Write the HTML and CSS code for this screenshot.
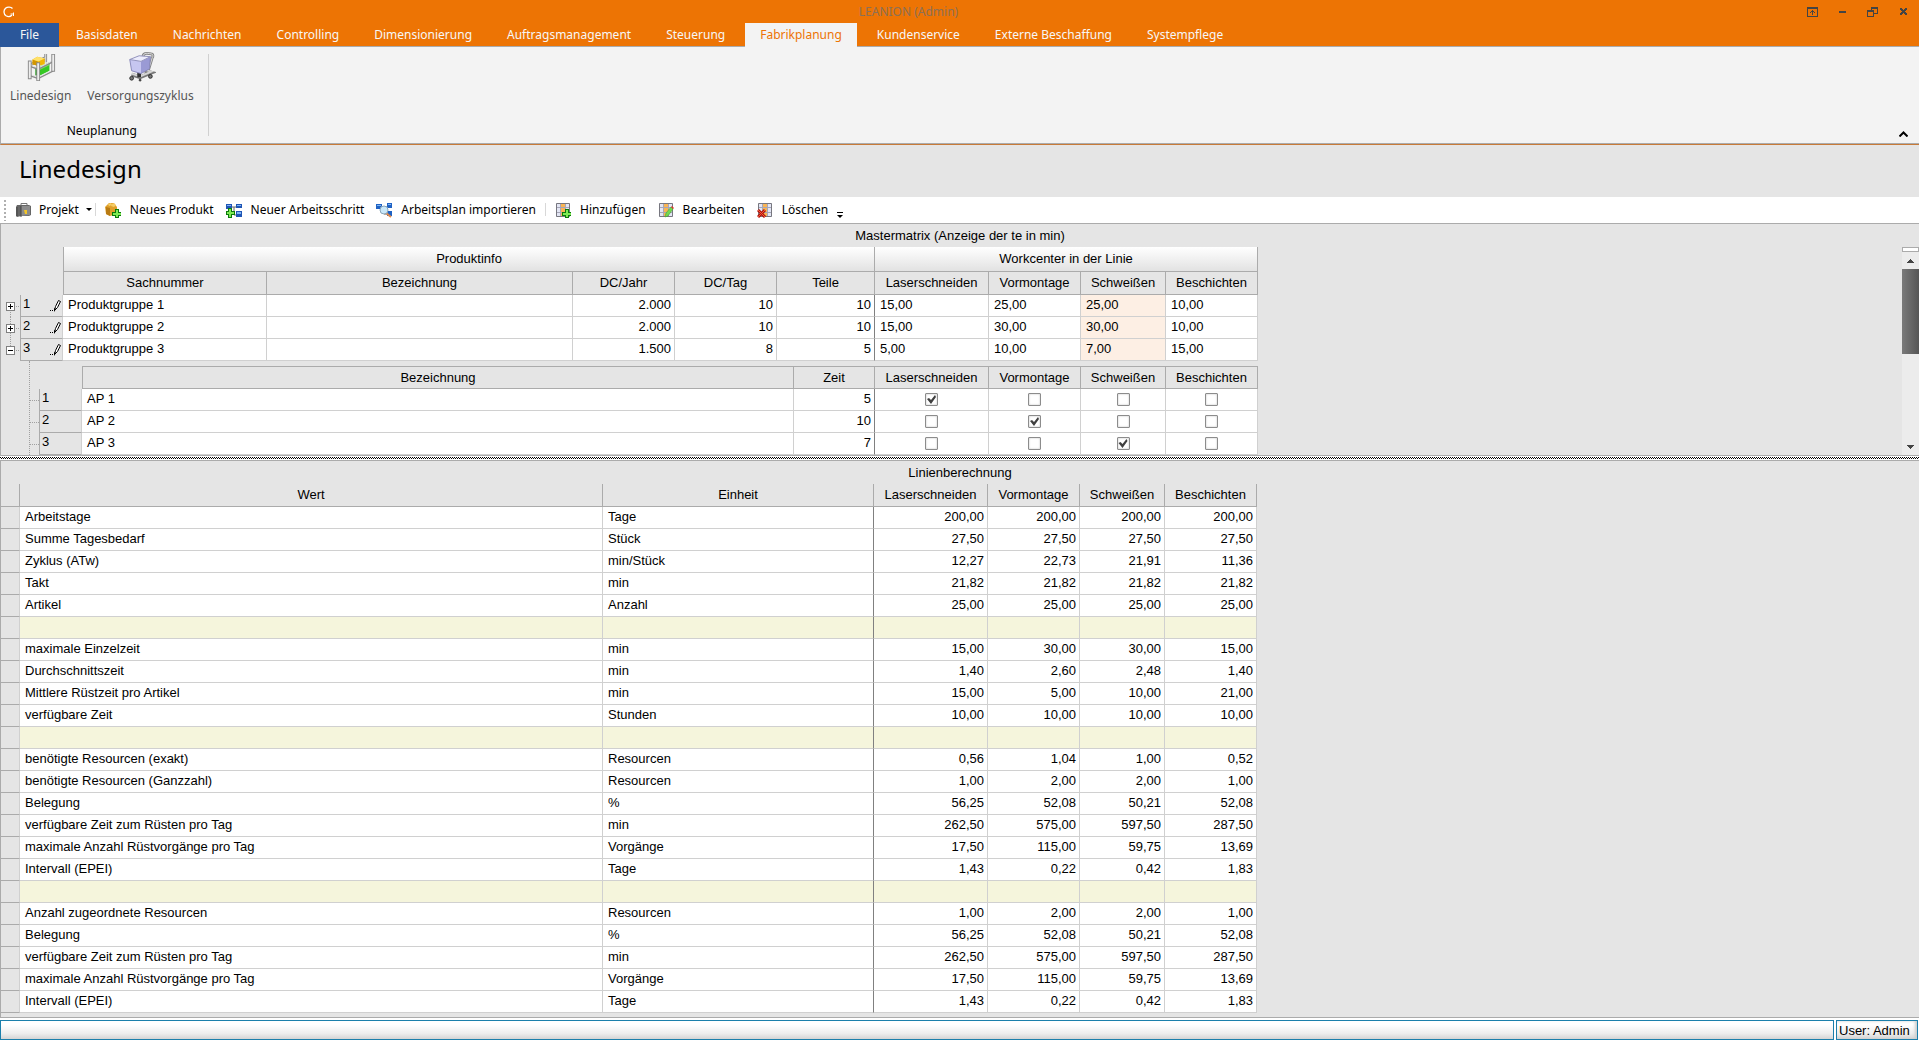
FILE: index.html
```html
<!DOCTYPE html>
<html lang="de">
  <head>
    <meta charset="UTF-8" />
    <meta name="viewport" content="width=device-width, initial-scale=1.0" />
    <title>LEANION (Admin)</title>
    <link rel="stylesheet" href="styles.css">
  </head>
  <body>
    <header class="titlebar">
      <svg class="logo" width="12" height="12" viewBox="0 0 12 12" fill="none" stroke="#fff">
        <path d="M9.5 2.5C8 .8 4.500.5 2.500 2.300.3 4.500.600 8 3 9.700c2 1.300 4.500 1 6-.7" stroke-width="1.300" />
        <path d="M10.500 6.500v3.500M7.500 8h3" stroke-width="1" />
      </svg>
      <span class="app-title">LEANION (Admin)</span>
      <div class="window-buttons">
        <button type="button" aria-label="Menüband">
          <svg width="11" height="10" viewBox="0 0 11 10"><path fill="#444" fill-rule="evenodd" d="M0 0h11v10H0zM1 2v7h9V2zM5 3h1v1h1v1h1v1H7V5H6v3H5V5H4v1H3V5h1V4h1z" /></svg>
        </button>
        <button type="button" aria-label="Minimieren">
          <svg width="7" height="2" viewBox="0 0 7 2"><path fill="#444" d="M0 0h7v2H0z" /></svg>
        </button>
        <button type="button" aria-label="Wiederherstellen">
          <svg width="11" height="10" viewBox="0 0 11 10"><path fill="#444" fill-rule="evenodd" d="M4 0h7v7H7V6h3V2H5v1H4zM0 3h7v7H0zM1 5v4h5V5z" /></svg>
        </button>
        <button class="close" type="button" aria-label="Schließen">
          <svg width="7" height="7" viewBox="0 0 7 7"><path fill="#444" d="M0 0h2v1h1v1h1V1h1V0h2v2H6v1H5v1h1v1h1v2H5V6H4V5H3v1H2v1H0V5h1V4h1V3H1V2H0z" /></svg>
        </button>
      </div>
    </header>

    <nav class="tabs">
      <a class="file" href="#">File</a>
      <a href="#">Basisdaten</a>
      <a href="#">Nachrichten</a>
      <a href="#">Controlling</a>
      <a href="#">Dimensionierung</a>
      <a href="#">Auftragsmanagement</a>
      <a href="#">Steuerung</a>
      <a class="active" href="#">Fabrikplanung</a>
      <a href="#">Kundenservice</a>
      <a href="#">Externe Beschaffung</a>
      <a href="#">Systempflege</a>
    </nav>

    <section class="ribbon">
      <div class="ribbon-group">
        <div class="ribbon-items">
          <button type="button">
            <svg width="30" height="30" viewBox="0 0 32 32">
              <path d="M21 2v9M4 14l17-8" fill="none" stroke="#8a8a8a" stroke-width="3" />
              <path d="M21 2v9M4 14l17-8" fill="none" stroke="#e6e6e6" />
              <path d="M10 18l6-3v9l-6 1z" fill="#17930f" /><path d="M15 16l10-5v9l-10 5z" fill="#35c824" /><path d="M10 18l5-3 10-4v3l-10 5z" fill="#7be964" />
              <path d="M7 8l5-3 8 2v6l-7 2-6-2z" fill="#f2b705" /><path d="M7 8l6 2v5l-6-2z" fill="#d39600" /><path d="M7 8l5-3 8 2-7 3z" fill="#ffe16a" />
              <path d="M4 15l9 3 16-8M4 25l9 3 16-8" fill="none" stroke="#8a8a8a" stroke-width="2" />
              <path d="M4 14l9 3 16-8M4 24l9 3 16-8" fill="none" stroke="#ececec" />
              <path d="M4 9v20M13 11v20M29 2v19" fill="none" stroke="#8a8a8a" stroke-width="4" />
              <path d="M4 10v18M13 12v18M29 3v17" fill="none" stroke="#ededed" stroke-width="2" />
            </svg>
            Linedesign
          </button>
          <button type="button">
            <svg width="30" height="30" viewBox="0 0 32 32">
              <path d="M18 6c0-5 3-5 9-4 2 0 2 3 1 4l-4 13" fill="none" stroke="#858585" stroke-width="3" />
              <path d="M18 6c0-5 3-5 9-4 2 0 2 3 1 4l-4 13" fill="none" stroke="#dedede" stroke-width="1" />
              <path d="M6 24l9 3 12-5-7-2" fill="none" stroke="#777" stroke-width="4" />
              <path d="M6 23l9 3 12-5-7-2" fill="none" stroke="#d4d4d4" stroke-width="2" />
              <path d="M12 22h4v5h-4z" fill="#333" />
              <path d="M4 8l12 2v13L6 20z" fill="#c6c6f0" /><path d="M16 10l10-5-1 13-9 5z" fill="#9a9ad4" />
              <path d="M4 8l10-4 12 1-10 5z" fill="#ececfc" stroke="#8c8cb8" />
              <path d="M4 8l2 12 10 3 9-5 1-13" fill="none" stroke="#8585b8" />
              <g fill="#777" stroke="#2b2b2b"><circle cx="6" cy="28" r="2" /><circle cx="15" cy="30" r="1" /><circle cx="26" cy="26" r="2" /></g>
            </svg>
            Versorgungszyklus
          </button>
        </div>
        <div class="ribbon-caption">Neuplanung</div>
      </div>
      <button class="collapse" type="button" aria-label="Menüband reduzieren">
        <svg width="9" height="6" viewBox="0 0 9 6"><path d="M.5 5.500l4-4 4 4" fill="none" stroke="#000" stroke-width="2" /></svg>
      </button>
    </section>

    <h1>Linedesign</h1>

    <div class="toolbar">
      <span class="grip"></span>
      <button class="menu" type="button">
        <svg width="16" height="16" viewBox="0 0 16 16"><path d="M5 4V1.500h6V3" fill="none" stroke="#777" /><path d="M1 3h12l2 1v9l-2 1H5l-4 1-1-1V5z" fill="#666" /><path d="M5 4h9v9l-9 1z" fill="#8c8c8c" /><path d="M5 4v11M1 5v9" stroke="#444" fill="none" /><path d="M8 8h3v4H9z" fill="#f5c726" /></svg>
        Projekt
        <i class="caret"></i>
      </button>
      <span class="sep"></span>
      <button type="button">
        <svg width="16" height="16" viewBox="0 0 16 16"><path d="M0 5l4-4h5l3 4v7l-7 2-4-2z" fill="#dfa02b" /><path d="M1 5l4 1v8l-4-2z" fill="#b97b13" /><path d="M3 2l3-1 1 2-3 1zM8 1l3 2-2 2-3-1z" fill="#f6ce69" /><path d="M10 7h4v3h2v4h-2v2h-4v-2H7v-4h3z" fill="#0b7a0b" /><path d="M11 8h2v3h3v2h-3v2h-2v-2H8v-2h3z" fill="#7eea55" /></svg>
        Neues Produkt
      </button>
      <button type="button">
        <svg width="16" height="16" viewBox="0 0 16 16"><path d="M5 5h5M8 5v8h2" fill="none" stroke="#666" /><path d="M0 2h6v5H0zM10 2h6v4h-6zM10 9h6v6h-6z" fill="#1f55b5" /><path d="M1 3h4v1H1zM11 3h4v1h-4zM11 10h4v2h-4z" fill="#7db5f5" /><path d="M2 6h4v3h3v4H6v3H2v-3H0V9h2z" fill="#0b7a0b" /><path d="M3 7h2v3h3v2H5v3H3v-3H1v-2h2z" fill="#7eea55" /></svg>
        Neuer Arbeitsschritt
      </button>
      <button type="button">
        <svg width="16" height="16" viewBox="0 0 16 16"><path d="M4 5h7M8 5v7h4" fill="none" stroke="#666" /><path d="M0 2h6v5H0zM11 1h5v5h-5zM11 9h5v5h-5z" fill="#1f62c4" /><path d="M1 3h4v1H1zM12 2h3v1h-3z" fill="#7db5f5" /><path d="M10 11l5 4" stroke="#e08a4c" stroke-width="2" /><circle cx="8" cy="8" r="4" fill="#c9e8fa" stroke="#8aa5b8" /></svg>
        Arbeitsplan importieren
      </button>
      <span class="sep"></span>
      <button type="button">
        <svg width="16" height="16" viewBox="0 0 16 16"><path d="M1 1h14v14H1z" fill="#e3e6f4" /><path d="M6 1h5v14H6z" fill="#f9b554" /><path d="M1 5.500h14M1 10.500h14M5.500 1v14M10.500 1v14" stroke="#a6a6b8" /><path d="M1.500 1.500h13v13h-13z" fill="none" stroke="#77777f" /><path d="M10 7h4v3h2v4h-2v2h-4v-2H7v-4h3z" fill="#0b7a0b" /><path d="M11 8h2v3h3v2h-3v2h-2v-2H8v-2h3z" fill="#7eea55" /></svg>
        Hinzufügen
      </button>
      <button type="button">
        <svg width="16" height="16" viewBox="0 0 16 16"><path d="M1 1h14v14H1z" fill="#e3e6f4" /><path d="M6 1h5v14H6z" fill="#f9b554" /><path d="M1 5.500h14M1 10.500h14M5.500 1v14M10.500 1v14" stroke="#a6a6b8" /><path d="M1.500 1.500h13v13h-13z" fill="none" stroke="#77777f" /><path d="M7 15l1-4 5-6 2 2-5 7z" fill="#74d850" stroke="#3d9a2a" stroke-width=".5" /><path d="M13 5l1-1 2 2-1 1z" fill="#e0342b" /></svg>
        Bearbeiten
      </button>
      <button type="button">
        <svg width="16" height="16" viewBox="0 0 16 16"><path d="M1 1h14v14H1z" fill="#e3e6f4" /><path d="M6 1h5v14H6z" fill="#f9b554" /><path d="M1 5.500h14M1 10.500h14M5.500 1v14M10.500 1v14" stroke="#a6a6b8" /><path d="M1.500 1.500h13v13h-13z" fill="none" stroke="#77777f" /><path d="M1 8l7 7M8 8l-7 7" stroke="#b31509" stroke-width="3" /><path d="M1 8l7 7M8 8l-7 7" stroke="#f2573f" stroke-width="1" /></svg>
        Löschen
      </button>
      <span class="overflow"><i class="caret"></i></span>
    </div>

    <main>
      <section class="panel master">
        <h2>Mastermatrix (Anzeige der te in min)</h2>
        <div class="scroll-area">
          <div class="grids">
            <table class="grid matrix">
              <colgroup>
                <col class="tree-col" /><col class="head-col" /><col class="sachnummer" /><col class="bezeichnung" />
                <col class="dc" /><col class="dc" /><col class="teile" />
                <col class="laser" /><col class="vormontage" /><col class="schweissen" /><col class="beschichten" />
              </colgroup>
              <thead>
                <tr class="band">
                  <td colspan="2"></td>
                  <th class="first" colspan="5">Produktinfo</th>
                  <th colspan="4">Workcenter in der Linie</th>
                </tr>
                <tr>
                  <td colspan="2"></td>
                  <th class="first">Sachnummer</th>
                  <th>Bezeichnung</th>
                  <th>DC/Jahr</th>
                  <th>DC/Tag</th>
                  <th>Teile</th>
                  <th>Laserschneiden</th>
                  <th>Vormontage</th>
                  <th>Schweißen</th>
                  <th>Beschichten</th>
                </tr>
              </thead>
              <tbody>
                <tr>
                  <td class="tree top"><button class="toggle plus" type="button" aria-label="Aufklappen"></button></td>
                  <th class="row-head"><div>1<svg width="11" height="13" viewBox="0 0 11 13"><path d="M0 11h1v1H0zM2 11h1v1H2z" /><path d="M4.500 11.500l1-4 3-6 2 1-3 6z" fill="#fff" stroke="#000" /><path d="M4 9l2 1-2 3z" /></svg></div></th>
                  <td>Produktgruppe 1</td><td></td>
                  <td class="num">2.000</td><td class="num">10</td><td class="num split">10</td>
                  <td>15,00</td><td>25,00</td><td class="marked">25,00</td><td>10,00</td>
                </tr>
                <tr>
                  <td class="tree"><button class="toggle plus" type="button" aria-label="Aufklappen"></button></td>
                  <th class="row-head"><div>2<svg width="11" height="13" viewBox="0 0 11 13"><path d="M0 11h1v1H0zM2 11h1v1H2z" /><path d="M4.500 11.500l1-4 3-6 2 1-3 6z" fill="#fff" stroke="#000" /><path d="M4 9l2 1-2 3z" /></svg></div></th>
                  <td>Produktgruppe 2</td><td></td>
                  <td class="num">2.000</td><td class="num">10</td><td class="num split">10</td>
                  <td>15,00</td><td>30,00</td><td class="marked">30,00</td><td>10,00</td>
                </tr>
                <tr>
                  <td class="tree end"><button class="toggle" type="button" aria-label="Zuklappen"></button></td>
                  <th class="row-head"><div>3<svg width="11" height="13" viewBox="0 0 11 13"><path d="M0 11h1v1H0zM2 11h1v1H2z" /><path d="M4.500 11.500l1-4 3-6 2 1-3 6z" fill="#fff" stroke="#000" /><path d="M4 9l2 1-2 3z" /></svg></div></th>
                  <td>Produktgruppe 3</td><td></td>
                  <td class="num">1.500</td><td class="num">8</td><td class="num split">5</td>
                  <td>5,00</td><td>10,00</td><td class="marked">7,00</td><td>15,00</td>
                </tr>
              </tbody>
            </table>

            <div class="detail">
              <table class="grid">
                <colgroup>
                  <col class="branch-col" /><col class="head-col" /><col class="schritt" /><col class="zeit" />
                  <col class="laser" /><col class="vormontage" /><col class="schweissen" /><col class="beschichten" />
                </colgroup>
                <thead>
                  <tr>
                    <td colspan="2"></td>
                    <th class="first">Bezeichnung</th>
                    <th>Zeit</th>
                    <th>Laserschneiden</th>
                    <th>Vormontage</th>
                    <th>Schweißen</th>
                    <th>Beschichten</th>
                  </tr>
                </thead>
                <tbody>
                  <tr>
                    <td class="branch"></td>
                    <th class="row-head"><div>1</div></th>
                    <td>AP 1</td><td class="num split">5</td>
                    <td class="check"><input type="checkbox" aria-label="AP 1 Laserschneiden" checked /></td>
                    <td class="check"><input type="checkbox" aria-label="AP 1 Vormontage" /></td>
                    <td class="check"><input type="checkbox" aria-label="AP 1 Schweißen" /></td>
                    <td class="check"><input type="checkbox" aria-label="AP 1 Beschichten" /></td>
                  </tr>
                  <tr>
                    <td class="branch"></td>
                    <th class="row-head"><div>2</div></th>
                    <td>AP 2</td><td class="num split">10</td>
                    <td class="check"><input type="checkbox" aria-label="AP 2 Laserschneiden" /></td>
                    <td class="check"><input type="checkbox" aria-label="AP 2 Vormontage" checked /></td>
                    <td class="check"><input type="checkbox" aria-label="AP 2 Schweißen" /></td>
                    <td class="check"><input type="checkbox" aria-label="AP 2 Beschichten" /></td>
                  </tr>
                  <tr>
                    <td class="branch"></td>
                    <th class="row-head"><div>3</div></th>
                    <td>AP 3</td><td class="num split">7</td>
                    <td class="check"><input type="checkbox" aria-label="AP 3 Laserschneiden" /></td>
                    <td class="check"><input type="checkbox" aria-label="AP 3 Vormontage" /></td>
                    <td class="check"><input type="checkbox" aria-label="AP 3 Schweißen" checked /></td>
                    <td class="check"><input type="checkbox" aria-label="AP 3 Beschichten" /></td>
                  </tr>
                </tbody>
              </table>
            </div>
          </div>
          <div class="scrollbar">
            <span class="split-box"></span>
            <button type="button" aria-label="Nach oben"><svg width="7" height="4" viewBox="0 0 7 4"><path d="M3 0h1v1h1v1h1v1h1v1H0V3h1V2h1V1h1z" fill="#444" /></svg></button>
            <span class="thumb"></span>
            <button class="down" type="button" aria-label="Nach unten"><svg width="7" height="4" viewBox="0 0 7 4"><path d="M3 4h1V3h1V2h1V1h1V0H0v1h1v1h1v1h1z" fill="#444" /></svg></button>
          </div>
        </div>
      </section>

      <div class="splitter"></div>

      <section class="panel calc">
        <h2>Linienberechnung</h2>
        <table class="grid">
          <colgroup>
            <col class="marker-col" /><col class="wert" /><col class="einheit" />
            <col class="laser" /><col class="vormontage" /><col class="schweissen" /><col class="beschichten" />
          </colgroup>
          <thead>
            <tr>
              <th></th>
              <th>Wert</th>
              <th>Einheit</th>
              <th>Laserschneiden</th>
              <th>Vormontage</th>
              <th>Schweißen</th>
              <th>Beschichten</th>
            </tr>
          </thead>
          <tbody>
            <tr><th></th><td>Arbeitstage</td><td>Tage</td><td>200,00</td><td>200,00</td><td>200,00</td><td>200,00</td></tr>
            <tr><th></th><td>Summe Tagesbedarf</td><td>Stück</td><td>27,50</td><td>27,50</td><td>27,50</td><td>27,50</td></tr>
            <tr><th></th><td>Zyklus (ATw)</td><td>min/Stück</td><td>12,27</td><td>22,73</td><td>21,91</td><td>11,36</td></tr>
            <tr><th></th><td>Takt</td><td>min</td><td>21,82</td><td>21,82</td><td>21,82</td><td>21,82</td></tr>
            <tr><th></th><td>Artikel</td><td>Anzahl</td><td>25,00</td><td>25,00</td><td>25,00</td><td>25,00</td></tr>
            <tr class="blank"><th></th><td></td><td></td><td></td><td></td><td></td><td></td></tr>
            <tr><th></th><td>maximale Einzelzeit</td><td>min</td><td>15,00</td><td>30,00</td><td>30,00</td><td>15,00</td></tr>
            <tr><th></th><td>Durchschnittszeit</td><td>min</td><td>1,40</td><td>2,60</td><td>2,48</td><td>1,40</td></tr>
            <tr><th></th><td>Mittlere Rüstzeit pro Artikel</td><td>min</td><td>15,00</td><td>5,00</td><td>10,00</td><td>21,00</td></tr>
            <tr><th></th><td>verfügbare Zeit</td><td>Stunden</td><td>10,00</td><td>10,00</td><td>10,00</td><td>10,00</td></tr>
            <tr class="blank"><th></th><td></td><td></td><td></td><td></td><td></td><td></td></tr>
            <tr><th></th><td>benötigte Resourcen (exakt)</td><td>Resourcen</td><td>0,56</td><td>1,04</td><td>1,00</td><td>0,52</td></tr>
            <tr><th></th><td>benötigte Resourcen (Ganzzahl)</td><td>Resourcen</td><td>1,00</td><td>2,00</td><td>2,00</td><td>1,00</td></tr>
            <tr><th></th><td>Belegung</td><td>%</td><td>56,25</td><td>52,08</td><td>50,21</td><td>52,08</td></tr>
            <tr><th></th><td>verfügbare Zeit zum Rüsten pro Tag</td><td>min</td><td>262,50</td><td>575,00</td><td>597,50</td><td>287,50</td></tr>
            <tr><th></th><td>maximale Anzahl Rüstvorgänge pro Tag</td><td>Vorgänge</td><td>17,50</td><td>115,00</td><td>59,75</td><td>13,69</td></tr>
            <tr><th></th><td>Intervall (EPEI)</td><td>Tage</td><td>1,43</td><td>0,22</td><td>0,42</td><td>1,83</td></tr>
            <tr class="blank"><th></th><td></td><td></td><td></td><td></td><td></td><td></td></tr>
            <tr><th></th><td>Anzahl zugeordnete Resourcen</td><td>Resourcen</td><td>1,00</td><td>2,00</td><td>2,00</td><td>1,00</td></tr>
            <tr><th></th><td>Belegung</td><td>%</td><td>56,25</td><td>52,08</td><td>50,21</td><td>52,08</td></tr>
            <tr><th></th><td>verfügbare Zeit zum Rüsten pro Tag</td><td>min</td><td>262,50</td><td>575,00</td><td>597,50</td><td>287,50</td></tr>
            <tr><th></th><td>maximale Anzahl Rüstvorgänge pro Tag</td><td>Vorgänge</td><td>17,50</td><td>115,00</td><td>59,75</td><td>13,69</td></tr>
            <tr><th></th><td>Intervall (EPEI)</td><td>Tage</td><td>1,43</td><td>0,22</td><td>0,42</td><td>1,83</td></tr>
          </tbody>
        </table>
      </section>
    </main>

    <footer class="statusbar">
      <div class="status"></div>
      <div class="user">User: Admin</div>
    </footer>
  </body>
</html>
```

FILE: styles.css
```css
* {
  box-sizing: border-box;
}

body {
  display: flex;
  flex-direction: column;
  min-height: 100vh;
  margin: 0;
  background-color: #e5e5e5;
  color: black;
  font-family: "Liberation Sans", Arial, sans-serif;
  font-size: 13px;
}

button {
  padding: 0;
  border: none;
  background: none;
  color: inherit;
  font: inherit;
}

svg {
  display: block;
  flex: none;
}

/* title bar and tabs */

.titlebar {
  display: flex;
  align-items: center;
  height: 23px;
  background-color: #ed7404;
}

.logo {
  margin: 0 5px 0 3px;
}

.app-title {
  flex: 1;
  color: #8c7056;
  font: 12px "Noto Sans", sans-serif;
  text-align: center;
}

.window-buttons {
  display: flex;
}

.window-buttons button {
  display: flex;
  align-items: center;
  justify-content: center;
  width: 30px;
  height: 22px;
}

.window-buttons .close {
  width: 32px;
}

.tabs {
  display: flex;
  height: 24px;
  border-bottom: 1px solid #ababab;
  background-color: #ed7404;
  font: 12px "Noto Sans", sans-serif;
}

.tabs a {
  height: 24px;
  margin-right: 5px;
  padding: 0 15px;
  color: #f7f7f7;
  line-height: 23px;
  text-decoration: none;
}

.tabs .file {
  width: 59px;
  margin-right: 2px;
  padding: 0;
  background-color: #2b579a;
  text-align: center;
}

.tabs .active {
  background-color: #f3f3f3;
  color: #ed7404;
}

/* ribbon */

.ribbon {
  display: flex;
  align-items: flex-end;
  justify-content: space-between;
  height: 98px;
  border-left: 1px solid #ababab;
  border-bottom: 1px solid #c87a38;
  background-color: #f3f3f3;
  box-shadow: inset 0 -1px #ababab;
  font: 12px "Noto Sans", sans-serif;
}

.ribbon-group {
  display: flex;
  flex-direction: column;
  justify-content: space-between;
  height: 82px;
  margin-bottom: 8px;
  padding: 0 14px 0 9px;
  border-right: 1px solid #d0d0d0;
}

.ribbon-items {
  display: flex;
  gap: 16px;
  margin-top: -2px;
}

.ribbon-items button {
  display: flex;
  flex-direction: column;
  align-items: center;
  gap: 5px;
  color: #555;
  line-height: 18px;
}

.ribbon-caption {
  line-height: 10px;
  text-align: center;
}

.collapse {
  margin: 0 11px 7px 0;
}

h1 {
  height: 52px;
  margin: 0;
  padding: 0 19px;
  font: 24px/48px "Noto Sans", sans-serif;
}

/* toolbar */

.toolbar {
  display: flex;
  align-items: center;
  height: 26px;
  padding: 0 0 1px 3px;
  background-color: white;
  font: 12px/18px "Noto Sans", sans-serif;
}

.toolbar button {
  display: flex;
  align-items: center;
  gap: 9px;
  padding: 0 6px;
}

.toolbar .menu {
  gap: 7px;
  padding: 0 0 0 8px;
}

.grip {
  width: 5px;
  height: 22px;
  background: radial-gradient(circle, #b0b0b0 1px, transparent 1px) 0 0 / 4px 4px;
}

.caret {
  border: 3px solid transparent;
  border-top-color: black;
  border-bottom: none;
}

.sep {
  width: 1px;
  height: 13px;
  margin: 0 3px;
  background-color: #d8d8d8;
}

.overflow {
  align-self: flex-end;
  margin: 0 0 4px 3px;
  border-top: 1px solid black;
}

.overflow .caret {
  display: block;
  margin-top: 2px;
}

/* panels */

main {
  display: flex;
  flex: 1;
  flex-direction: column;
}

.panel {
  border: 1px solid #ababab;
  border-right: none;
}

.calc {
  flex: 1;
}

h2 {
  margin: 0;
  font-size: 13px;
  font-weight: normal;
  line-height: 23px;
  text-align: center;
}

.scroll-area {
  display: flex;
}

.grids {
  flex: 1;
}

.splitter {
  height: 4px;
  background: repeating-conic-gradient(black 0 25%, white 0 50%) 0 1px / 2px 2px;
  border: solid white;
  border-width: 1px 0;
}

/* grids */

.grid {
  border-spacing: 0;
  table-layout: fixed;
  width: 0;
}

.tree-col,
.marker-col {
  width: 19px;
}

.branch-col {
  width: 9px;
}

.head-col {
  width: 43px;
}

.sachnummer {
  width: 204px;
}

.bezeichnung {
  width: 306px;
}

.dc {
  width: 102px;
}

.teile {
  width: 98px;
}

.laser {
  width: 114px;
}

.vormontage,
.beschichten {
  width: 92px;
}

.schweissen {
  width: 85px;
}

.schritt {
  width: 712px;
}

.zeit {
  width: 81px;
}

.wert {
  width: 583px;
}

.einheit {
  width: 271px;
}

.grid td,
.grid th {
  padding: 0;
  overflow: hidden;
  font-weight: normal;
  white-space: nowrap;
}

.grid thead th {
  height: 23px;
  border: solid #ababab;
  border-width: 0 1px 1px 0;
  line-height: 22px;
}

.grid thead .first {
  border-left-width: 1px;
}

.grid .band th {
  height: 25px;
  background: linear-gradient(white, #e2e2e2);
  line-height: 24px;
}

.grid tbody td {
  height: 22px;
  padding: 0 3px 2px 5px;
  border: solid #d0d0d0;
  border-width: 0 1px 1px 0;
  background-color: white;
  line-height: 19px;
}

.grid .num,
.calc tbody td:nth-child(n + 4) {
  text-align: right;
}

.grid .split,
.calc tbody td:nth-child(3) {
  border-right-color: #808080;
}

.grid .marked {
  background-color: #fdefe4;
}

.calc .blank td {
  background-color: #f5f5dc;
}

.calc tbody th {
  border: solid #ababab;
  border-width: 0 0 1px;
  border-right: 1px solid #d0d0d0;
}

.grid .row-head {
  border: solid #ababab;
  border-width: 0 1px 1px;
  border-right-color: #d0d0d0;
}

.row-head div {
  display: flex;
  align-items: flex-end;
  justify-content: space-between;
  height: 21px;
  padding: 0 1px 4px 2px;
  line-height: 17px;
}

.grid .tree {
  padding: 0 0 0 5px;
  border: none;
  background:
    repeating-linear-gradient(90deg, #a0a0a0 0 1px, transparent 1px 2px) 15px 11px / 4px 1px no-repeat,
    repeating-linear-gradient(#a0a0a0 0 1px, transparent 1px 2px) 9px 0 / 1px 100% no-repeat;
}

.grid .top {
  background-position: 15px 11px, 9px 11px;
}

.grid .end {
  background-size: 4px 1px, 1px 11px;
}

.toggle {
  display: block;
  width: 9px;
  height: 9px;
  border: 1px solid #808080;
  background: linear-gradient(black, black) center / 5px 1px no-repeat white;
}

.plus {
  background:
    linear-gradient(black, black) center / 5px 1px no-repeat,
    linear-gradient(black, black) center / 1px 5px no-repeat white;
}

.detail {
  margin-left: 28px;
  padding-top: 5px;
  border-left: 1px dotted #a0a0a0;
}

.detail thead th {
  height: 23px;
  border-top-width: 1px;
  line-height: 21px;
}

.grid .branch {
  padding: 0;
  border: none;
  background: repeating-linear-gradient(90deg, #a0a0a0 0 1px, transparent 1px 2px) 0 11px / 100% 1px no-repeat;
}

.grid .check {
  padding: 0;
}

input[type="checkbox"] {
  display: block;
  appearance: none;
  width: 13px;
  height: 13px;
  margin: 0 auto;
  border: 1px solid #8c8c8c;
  border-radius: 1px;
  background-color: white;
  box-shadow: inset 0 0 2px #bbb;
}

input[type="checkbox"]:checked::before {
  content: "";
  display: block;
  height: 11px;
  background-color: #404040;
  clip-path: polygon(1px 5px, 3px 4px, 5px 6px, 9px 1px, 10px 3px, 5px 10px);
}

/* scrollbar */

.scrollbar {
  display: flex;
  flex-direction: column;
  width: 17px;
  background-color: #ececec;
}

.scrollbar button {
  display: flex;
  align-items: center;
  justify-content: center;
  height: 17px;
}

.scrollbar .down {
  margin-top: auto;
}

.split-box {
  height: 5px;
  border: 1px solid #ababab;
  background-color: white;
}

.thumb {
  height: 85px;
  background: linear-gradient(90deg, #7a7a7a, #555);
}

/* status bar */

.statusbar {
  display: flex;
  gap: 2px;
  padding: 2px 1px 0 0;
  background-color: white;
}

.statusbar div {
  height: 20px;
  border: 1px solid #1b7fab;
  background: linear-gradient(white 20%, #ededed 70%, #d4d4d4);
  line-height: 19px;
}

.status {
  flex: 1;
}

.statusbar .user {
  width: 82px;
  padding-left: 2px;
  box-shadow: inset -2px 0 3px #ccc;
}
```
